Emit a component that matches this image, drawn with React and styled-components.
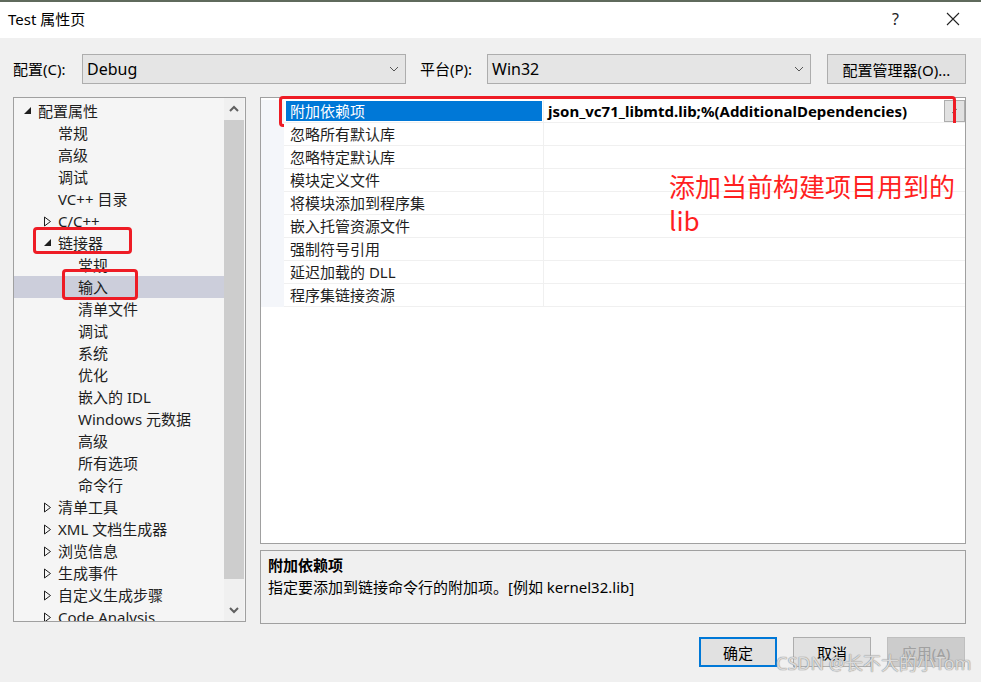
import React from 'react';
import styled, { createGlobalStyle } from 'styled-components';

const GlobalStyle = createGlobalStyle`
  html, body {
    margin: 0;
    padding: 0;
    background: #f0f0f0;
  }
  body {
    font-family: "Noto Sans", "Noto Sans CJK SC", sans-serif;
    font-size: 15px;
    color: #000;
  }
  * { box-sizing: border-box; }
`;

const Window = styled.div`
  width: 981px;
  height: 682px;
  display: flex;
  flex-direction: column;
  background: #f0f0f0;
  position: relative;
  overflow: hidden;
`;

const TitleBar = styled.div`
  height: 38px;
  background: #fff;
  border-top: 2px solid #5f6a5c;
  display: flex;
  align-items: center;
  padding: 0 0 2px 8px;
`;

const Title = styled.div`
  flex: 1;
  font-size: 15px;
  line-height: 20px;
`;

const TitleButton = styled.div`
  width: 57px;
  height: 36px;
  display: flex;
  align-items: center;
  justify-content: center;
  font-size: 16px;
  color: #222;
`;

const Body = styled.div`
  flex: 1;
  display: flex;
  flex-direction: column;
  padding: 16px 15px 0 13px;
`;

const ConfigRow = styled.div`
  display: flex;
  align-items: center;
  height: 30px;
`;

const Label = styled.div`
  width: ${p => p.$w}px;
  padding-left: ${p => p.$pl || 0}px;
  flex-shrink: 0;
  line-height: 20px;
`;

const Combo = styled.div`
  width: 324px;
  height: 30px;
  background: #e5e5e5;
  border: 1px solid #adadad;
  display: flex;
  align-items: center;
  padding: 0 6px 0 4px;
  flex-shrink: 0;
`;

const ComboText = styled.div`
  flex: 1;
  font-size: 16px;
`;

const PushButton = styled.div`
  width: ${p => p.$w}px;
  height: ${p => p.$h || 30}px;
  margin-left: ${p => p.$ml || 0}px;
  display: flex;
  align-items: center;
  justify-content: center;
  background: ${p => (p.$disabled ? '#cccccc' : '#e1e1e1')};
  color: ${p => (p.$disabled ? '#a0a0a0' : '#000')};
  border: ${p => (p.$default ? '2px solid #0078d7' : p.$disabled ? '1px solid #bfbfbf' : '1px solid #adadad')};
  flex-shrink: 0;
`;

const Main = styled.div`
  display: flex;
  gap: 14px;
  margin-top: 13px;
  height: 527px;
`;

const TreePanel = styled.div`
  width: 233px;
  height: 525px;
  border: 1px solid #a0a0a0;
  background: #f5f5f5;
  display: flex;
  overflow: hidden;
`;

const TreeList = styled.div`
  flex: 1;
  padding-top: 2px;
  overflow: hidden;
`;

const TreeRow = styled.div`
  position: relative;
  height: 22px;
  display: flex;
  align-items: center;
  padding-left: ${p => 9 + p.$level * 20}px;
  background: ${p => (p.$selected ? '#cccedb' : 'transparent')};
  white-space: nowrap;
  color: #1e1e1e;
  line-height: 20px;
`;

const Toggle = styled.span`
  width: 15px;
  display: inline-flex;
  align-items: center;
  flex-shrink: 0;
`;

const Mark = styled.div`
  position: absolute;
  left: ${p => p.$l}px;
  top: ${p => p.$t}px;
  width: ${p => p.$w}px;
  height: ${p => p.$h}px;
  border: 3px solid #ee1c25;
  border-radius: 4px;
  pointer-events: none;
`;

const ScrollBar = styled.div`
  width: 20px;
  margin-right: 1px;
  background: #f0f0f0;
  display: flex;
  flex-direction: column;
  align-items: stretch;
`;

const ScrollArrow = styled.div`
  height: 22px;
  display: flex;
  align-items: center;
  justify-content: center;
`;

const ScrollThumb = styled.div`
  height: 459px;
  background: #cdcdcd;
`;

const RightCol = styled.div`
  flex: 1;
  display: flex;
  flex-direction: column;
  gap: 6px;
`;

const GridPanel = styled.div`
  position: relative;
  height: 448px;
  border: 1px solid #a0a0a0;
  background: #fff;
  padding-top: 2px;
`;

const GridRows = styled.div`
  display: flex;
  flex-direction: column;
  background: #f4f6fa;
  padding-left: 23px;
`;

const GridRow = styled.div`
  position: relative;
  display: flex;
  height: 23px;
  background: #fff;
`;

const NameCell = styled.div`
  width: 260px;
  padding: 1px 1px 1px 2px;
  border-bottom: 1px solid #f0f0f0;
  border-right: 1px solid #f0f0f0;
  display: flex;
`;

const NameText = styled.div`
  flex: 1;
  display: flex;
  align-items: center;
  padding-left: 4px;
  background: ${p => (p.$active ? '#0078d7' : 'transparent')};
  color: ${p => (p.$active ? '#fff' : '#1e1e1e')};
  line-height: 20px;
  white-space: nowrap;
`;

const ValueCell = styled.div`
  flex: 1;
  display: flex;
  align-items: center;
  padding-left: 4px;
  border-bottom: 1px solid #f0f0f0;
  font-weight: 700;
  font-size: 15px;
  white-space: nowrap;
`;

const ValueText = styled.div`
  flex: 1;
`;

const DropButton = styled.div`
  width: 21px;
  height: 22px;
  background: #e1e1e1;
  border: 1px solid #adadad;
  display: flex;
  align-items: center;
  justify-content: center;
`;

const Annotation = styled.div`
  position: absolute;
  left: 408px;
  top: 71px;
  color: #ff1f1f;
  font-size: 26px;
  line-height: 34px;
  font-family: "Noto Sans CJK SC", "Noto Sans", sans-serif;
`;

const DescPanel = styled.div`
  height: 74px;
  border: 1px solid #a0a0a0;
  background: #f0f0f0;
  padding: 3px 7px;
  line-height: 22px;
`;

const DescTitle = styled.div`
  font-weight: 700;
`;

const ButtonRow = styled.div`
  display: flex;
  justify-content: flex-end;
  margin-top: 13px;
  padding-right: 1px;
  gap: 16px;
`;

const Watermark = styled.div`
  position: absolute;
  left: 776px;
  top: 651px;
  font-size: 18px;
  line-height: 24px;
  color: rgba(255, 255, 255, 0.7);
  text-shadow: 0 0 1px #888, 0 0 1px #888;
  font-family: "Noto Sans", "Noto Sans CJK SC", sans-serif;
  white-space: nowrap;
`;

const Chevron = ({ up, color = '#606060', size = 12 }) => (
  <svg width={size} height={size} viewBox="0 0 12 12">
    <path
      d={up ? 'M2 8 L6 4 L10 8' : 'M2 4 L6 8 L10 4'}
      fill="none"
      stroke={color}
      strokeWidth="2"
    />
  </svg>
);

const ComboArrow = () => (
  <svg width="10" height="8" viewBox="0 0 10 8">
    <path d="M1 2 L5 6 L9 2" fill="none" stroke="#555" strokeWidth="1" />
  </svg>
);

const Expanded = () => (
  <svg width="10" height="10" viewBox="0 0 10 10">
    <path d="M8 1 L8 8 L1 8 Z" fill="#1e1e1e" />
  </svg>
);

const Collapsed = () => (
  <svg width="10" height="11" viewBox="0 0 10 11">
    <path d="M1.5 1 L7.5 5.5 L1.5 10 Z" fill="none" stroke="#1e1e1e" strokeWidth="1" />
  </svg>
);

const treeItems = [
  { label: '配置属性', level: 0, toggle: 'open' },
  { label: '常规', level: 1 },
  { label: '高级', level: 1 },
  { label: '调试', level: 1 },
  { label: 'VC++ 目录', level: 1 },
  { label: 'C/C++', level: 1, toggle: 'closed' },
  { label: '链接器', level: 1, toggle: 'open', mark: { l: 19, t: -5, w: 99, h: 27 } },
  { label: '常规', level: 2 },
  { label: '输入', level: 2, selected: true, mark: { l: 48, t: -7, w: 76, h: 31 } },
  { label: '清单文件', level: 2 },
  { label: '调试', level: 2 },
  { label: '系统', level: 2 },
  { label: '优化', level: 2 },
  { label: '嵌入的 IDL', level: 2 },
  { label: 'Windows 元数据', level: 2 },
  { label: '高级', level: 2 },
  { label: '所有选项', level: 2 },
  { label: '命令行', level: 2 },
  { label: '清单工具', level: 1, toggle: 'closed' },
  { label: 'XML 文档生成器', level: 1, toggle: 'closed' },
  { label: '浏览信息', level: 1, toggle: 'closed' },
  { label: '生成事件', level: 1, toggle: 'closed' },
  { label: '自定义生成步骤', level: 1, toggle: 'closed' },
  { label: 'Code Analysis', level: 1, toggle: 'closed' },
];

const properties = [
  { name: '附加依赖项', value: 'json_vc71_libmtd.lib;%(AdditionalDependencies)', active: true },
  { name: '忽略所有默认库' },
  { name: '忽略特定默认库' },
  { name: '模块定义文件' },
  { name: '将模块添加到程序集' },
  { name: '嵌入托管资源文件' },
  { name: '强制符号引用' },
  { name: '延迟加载的 DLL' },
  { name: '程序集链接资源' },
];

const TreeItem = ({ item }) => (
  <TreeRow $level={item.level} $selected={item.selected}>
    <Toggle>
      {item.toggle === 'open' && <Expanded />}
      {item.toggle === 'closed' && <Collapsed />}
    </Toggle>
    <span>{item.label}</span>
    {item.mark && <Mark $l={item.mark.l} $t={item.mark.t} $w={item.mark.w} $h={item.mark.h} />}
  </TreeRow>
);

const App = () => {
  return (
    <Window>
      <GlobalStyle />
      <TitleBar>
        <Title>Test 属性页</Title>
        <TitleButton>?</TitleButton>
        <TitleButton>
          <svg width="14" height="14" viewBox="0 0 14 14">
            <path d="M1 1 L13 13 M13 1 L1 13" stroke="#222" strokeWidth="1.1" />
          </svg>
        </TitleButton>
      </TitleBar>

      <Body>
        <ConfigRow>
          <Label $w={69}>配置(C):</Label>
          <Combo>
            <ComboText>Debug</ComboText>
            <ComboArrow />
          </Combo>
          <Label $w={81} $pl={14}>平台(P):</Label>
          <Combo>
            <ComboText>Win32</ComboText>
            <ComboArrow />
          </Combo>
          <PushButton $w={139} $ml={16}>配置管理器(O)...</PushButton>
        </ConfigRow>

        <Main>
          <TreePanel>
            <TreeList>
              {treeItems.map((item, i) => (
                <TreeItem key={i} item={item} />
              ))}
            </TreeList>
            <ScrollBar>
              <ScrollArrow><Chevron up /></ScrollArrow>
              <ScrollThumb />
              <div style={{ flex: 1 }} />
              <ScrollArrow><Chevron /></ScrollArrow>
            </ScrollBar>
          </TreePanel>

          <RightCol>
            <GridPanel>
              <GridRows>
                {properties.map((p, i) => (
                  <GridRow key={i}>
                    <NameCell>
                      <NameText $active={p.active}>{p.name}</NameText>
                    </NameCell>
                    <ValueCell>
                      <ValueText>{p.value}</ValueText>
                      {p.active && (
                        <DropButton>
                          <svg width="8" height="8" viewBox="0 0 8 8">
                            <path d="M1 6 L6 2" stroke="#777" strokeWidth="1" />
                          </svg>
                        </DropButton>
                      )}
                    </ValueCell>
                    {p.active && <Mark $l={-5} $t={-4} $w={677} $h={31} />}
                  </GridRow>
                ))}
              </GridRows>
              <Annotation>
                添加当前构建项目用到的
                <br />
                lib
              </Annotation>
            </GridPanel>
            <DescPanel>
              <DescTitle>附加依赖项</DescTitle>
              <div>指定要添加到链接命令行的附加项。[例如 kernel32.lib]</div>
            </DescPanel>
          </RightCol>
        </Main>

        <ButtonRow>
          <PushButton $w={78} $default>确定</PushButton>
          <PushButton $w={78}>取消</PushButton>
          <PushButton $w={78} $disabled>应用(A)</PushButton>
        </ButtonRow>
      </Body>
      <Watermark>CSDN @长不大的小Tom</Watermark>
    </Window>
  );
};

export default App;
